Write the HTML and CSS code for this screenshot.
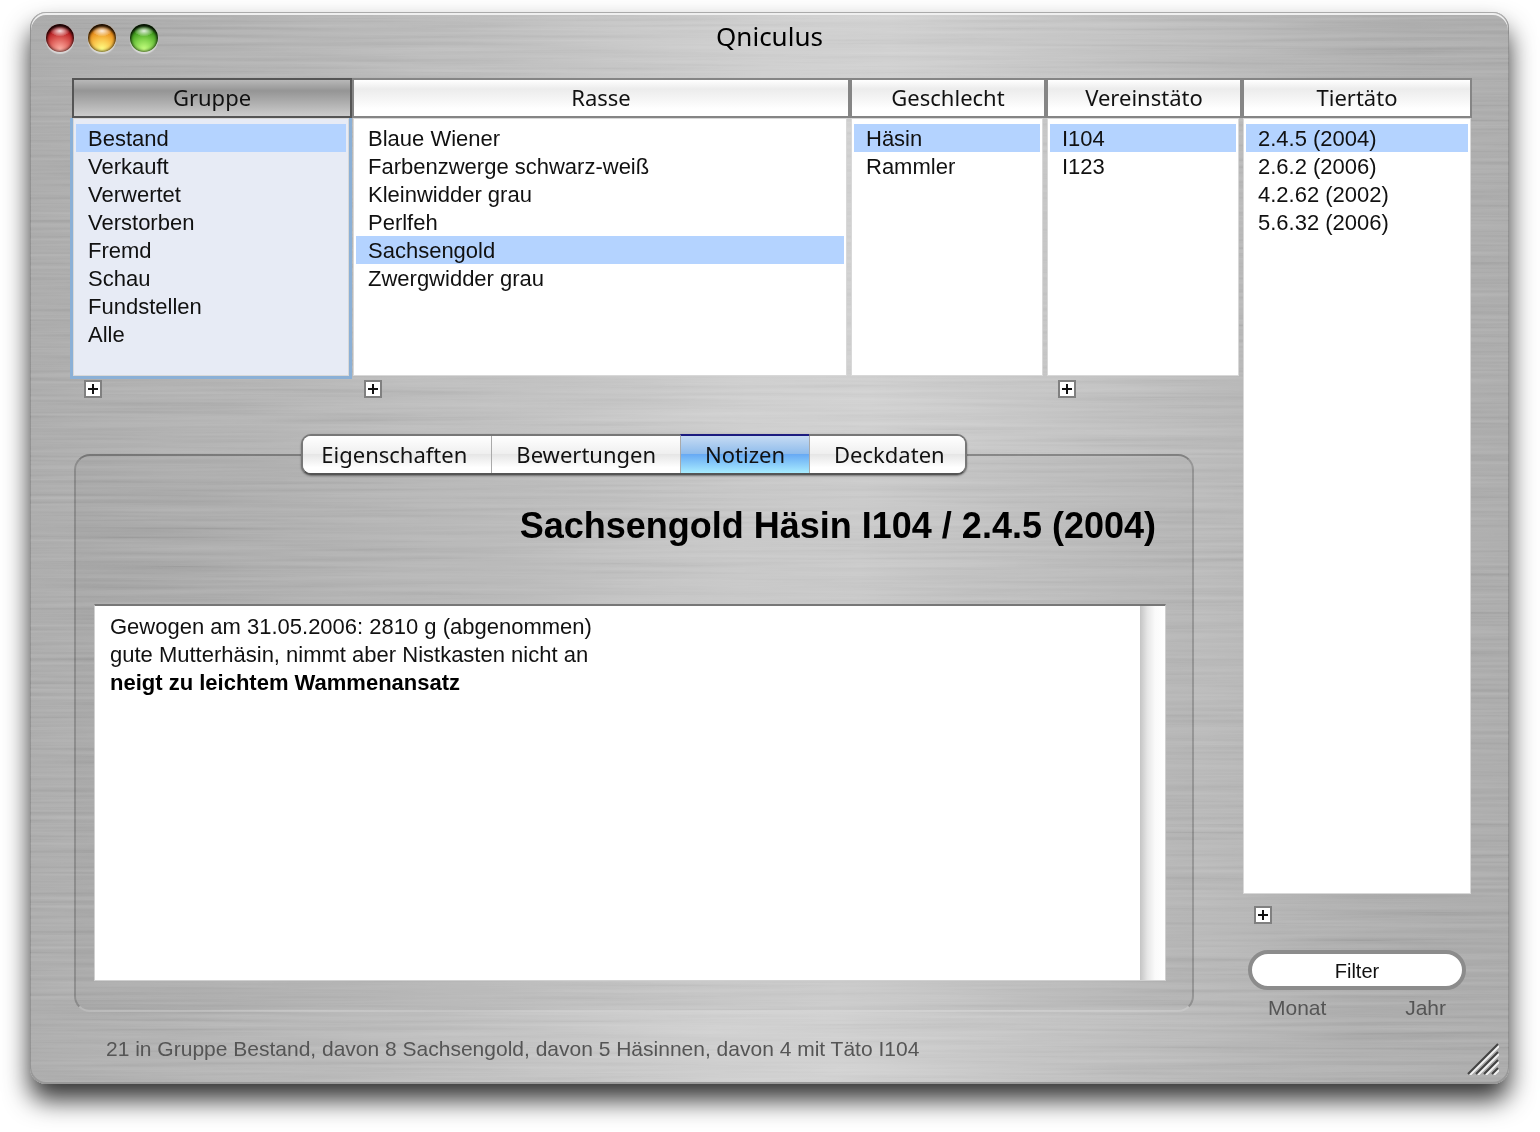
FILE: index.html
```html
<!DOCTYPE html>
<html lang="de">
<head>
  <meta charset="UTF-8">
  <meta name="viewport" content="width=device-width, initial-scale=1">
  <title>Qniculus</title>
  <link rel="stylesheet" href="styles.css">
</head>
<body>
  <div class="window">
    <!-- Gebürstetes Metall -->
    <svg class="metal" aria-hidden="true">
      <filter id="brushed" x="0" y="0" width="100%" height="100%">
        <feTurbulence type="fractalNoise" baseFrequency="0.004 0.26" numOctaves="3" seed="4"/>
        <feColorMatrix values="1 0 0 0 0  1 0 0 0 0  1 0 0 0 0  0 0 0 0 1"/>
      </filter>
      <rect width="100%" height="100%" filter="url(#brushed)"/>
    </svg>

    <header class="titlebar">
      <div class="lights">
        <button class="light red" aria-label="Schließen"></button>
        <button class="light yellow" aria-label="Minimieren"></button>
        <button class="light green" aria-label="Zoomen"></button>
      </div>
      <h1>Qniculus</h1>
    </header>

    <main class="workspace">
      <div class="left">
        <div class="browser">
          <section class="column active">
            <button class="column-head">Gruppe</button>
            <ul class="list">
              <li><button class="row selected">Bestand</button></li>
              <li><button class="row">Verkauft</button></li>
              <li><button class="row">Verwertet</button></li>
              <li><button class="row">Verstorben</button></li>
              <li><button class="row">Fremd</button></li>
              <li><button class="row">Schau</button></li>
              <li><button class="row">Fundstellen</button></li>
              <li><button class="row">Alle</button></li>
            </ul>
            <button class="plus" aria-label="Gruppe hinzufügen"></button>
          </section>
          <section class="column">
            <button class="column-head">Rasse</button>
            <ul class="list">
              <li><button class="row">Blaue Wiener</button></li>
              <li><button class="row">Farbenzwerge schwarz-weiß</button></li>
              <li><button class="row">Kleinwidder grau</button></li>
              <li><button class="row">Perlfeh</button></li>
              <li><button class="row selected">Sachsengold</button></li>
              <li><button class="row">Zwergwidder grau</button></li>
            </ul>
            <button class="plus" aria-label="Rasse hinzufügen"></button>
          </section>
          <section class="column">
            <button class="column-head">Geschlecht</button>
            <ul class="list">
              <li><button class="row selected">Häsin</button></li>
              <li><button class="row">Rammler</button></li>
            </ul>
          </section>
          <section class="column">
            <button class="column-head">Vereinstäto</button>
            <ul class="list">
              <li><button class="row selected">I104</button></li>
              <li><button class="row">I123</button></li>
            </ul>
            <button class="plus" aria-label="Vereinstäto hinzufügen"></button>
          </section>
        </div>

        <div class="details">
          <div class="tabs" role="tablist">
            <button class="tab" role="tab" aria-selected="false">Eigenschaften</button>
            <button class="tab" role="tab" aria-selected="false">Bewertungen</button>
            <button class="tab" role="tab" aria-selected="true">Notizen</button>
            <button class="tab" role="tab" aria-selected="false">Deckdaten</button>
          </div>
          <div class="panel" role="tabpanel">
            <h2>Sachsengold Häsin I104 / 2.4.5 (2004)</h2>
            <div class="notes">
              <div class="notes-text" contenteditable="true" role="textbox" aria-multiline="true" aria-label="Notizen" spellcheck="false">
                <p>Gewogen am 31.05.2006: 2810 g (abgenommen)</p>
                <p>gute Mutterhäsin, nimmt aber Nistkasten nicht an</p>
                <p><strong>neigt zu leichtem Wammenansatz</strong></p>
              </div>
              <div class="track"></div>
            </div>
          </div>
        </div>
      </div>

      <div class="right">
        <section class="column">
          <button class="column-head">Tiertäto</button>
          <ul class="list">
            <li><button class="row selected">2.4.5 (2004)</button></li>
            <li><button class="row">2.6.2 (2006)</button></li>
            <li><button class="row">4.2.62 (2002)</button></li>
            <li><button class="row">5.6.32 (2006)</button></li>
          </ul>
          <button class="plus" aria-label="Tiertäto hinzufügen"></button>
        </section>
        <div class="filter">
          <input type="text" class="filter-input" value="Filter" aria-label="Filter">
          <div class="filter-labels"><span>Monat</span><span>Jahr</span></div>
        </div>
      </div>
    </main>

    <footer class="status">21 in Gruppe Bestand, davon 8 Sachsengold, davon 5 Häsinnen, davon 4 mit Täto I104</footer>

    <svg class="grip" viewBox="0 0 32 32" aria-hidden="true">
      <path d="M3 32 32 3M11 32 32 11M19 32 32 19M27 32 32 27" stroke="#f2f2f2" stroke-width="2"/>
      <path d="M1 31 31 1M9 31 31 9M17 31 31 17M25 31 31 25" stroke="#444" stroke-width="2"/>
    </svg>
  </div>
</body>
</html>
```
FILE: styles.css
```css
:root {
  --ui-font: "Lucida Grande", "Noto Sans", sans-serif;
  --text-font: "Liberation Sans", Arial, sans-serif;
  --select: #b4d3ff;
  --line: #858585;
}

* { box-sizing: border-box; }
body { margin: 0; padding: 12px 31px 48px 30px; min-height: 100vh; display: flex; background: #fff; color: #111; font: 22px/28px var(--text-font); }
button, input { margin: 0; padding: 0; border: none; background: none; color: inherit; font: inherit; }
h1, h2, p, ul { margin: 0; padding: 0; list-style: none; }

/* Fenster */
.window { position: relative; isolation: isolate; flex: 1; min-width: 0; display: flex; flex-direction: column; border-radius: 16px; background: linear-gradient(93deg, #a4a4a4 0%, #acacac 14%, #b8b8b8 30%, #cacaca 48%, #cccccc 56%, #b8b8b8 74%, #a8a8a8 90%, #a4a4a4 100%); box-shadow: 0 16px 26px rgba(0,0,0,0.8); }
.window::after { content: ""; position: absolute; inset: 0; z-index: -1; border-radius: 16px; border-right: 1px solid rgba(0,0,0,0.15); border-left: 1px solid rgba(0,0,0,0.15); box-shadow: inset 0 1px #aaa, inset 0 3px #efefef, inset 0 -2px #999; pointer-events: none; }
.metal { position: absolute; inset: 0; z-index: -1; width: 100%; height: 100%; border-radius: 16px; mix-blend-mode: soft-light; opacity: 0.45; }

.titlebar { display: grid; grid-template-columns: 1fr auto 1fr; height: 66px; padding: 10px 16px 0; align-items: start; }
.titlebar h1 { color: #000; font: 26px/28px var(--ui-font); }
.lights { display: flex; gap: 14px; padding-top: 2px; }
.light { width: 28px; height: 28px; border-radius: 50%; box-shadow: inset 0 3px 3px rgba(0,0,0,0.8), inset 0 0 3px 1px rgba(0,0,0,0.6), 0 2px 1px rgba(255,255,255,0.5); }
.red { background: radial-gradient(ellipse 9px 5px at 50% 25%, rgba(255,255,255,0.85), rgba(255,255,255,0.1) 100%, transparent), radial-gradient(circle at 50% 90%, #ffb0a4, #e0625c 35%, #b51c20 65%, #7c1013); }
.yellow { background: radial-gradient(ellipse 9px 5px at 50% 25%, rgba(255,255,255,0.85), rgba(255,255,255,0.1) 100%, transparent), radial-gradient(circle at 50% 90%, #ffff85, #f9c34a 35%, #e68a18 65%, #8b3c08); }
.green { background: radial-gradient(ellipse 9px 5px at 50% 25%, rgba(255,255,255,0.85), rgba(255,255,255,0.1) 100%, transparent), radial-gradient(circle at 50% 90%, #c6ff80, #7fd24a 35%, #3c981a 65%, #164d0c); }

/* Aufteilung */
.workspace { flex: 1; display: flex; padding: 0 37px 0 42px; }
.left { flex: 1170 1 0; min-width: 0; display: flex; flex-direction: column; }
.right { flex: 230 1 0; min-width: 0; display: flex; flex-direction: column; }
.browser { display: grid; grid-template-columns: 280fr 498fr 196fr 196fr; }

/* Spalten */
.column { display: flex; flex-direction: column; align-items: stretch; }
.column-head { height: 40px; padding-bottom: 2px; border: 2px solid var(--line); background: linear-gradient(#fff, #ececec 25%, #f4f4f4 50%, #fff 80%); font: 22px/34px var(--ui-font); text-align: center; }
.active .column-head { border-color: #555; background: linear-gradient(#b8b8b8, #959595 30%, #a8a8a8 55%, #ccc); }
.list { min-height: 258px; margin: 0 3px 0 1px; padding: 5px 2px; border: 1px solid #d8d8d8; background: #fff; }
.active .list { background: #e7ebf5; box-shadow: 0 0 0 3px #8bb0d6; clip-path: inset(0 -4px -4px); }
.row { display: block; width: 100%; height: 28px; padding: 2px 12px 0; line-height: 26px; text-align: left; white-space: nowrap; }
.selected { background: var(--select); }
.plus { width: 18px; height: 18px; margin: 4px 0 0 12px; border: 2px solid #808080; background: linear-gradient(#111, #111) center / 10px 2px no-repeat, linear-gradient(#111, #111) center / 2px 10px no-repeat, #fff; }
.right .column { flex: 1; }
.right .list { flex: 1; margin-right: 1px; }
.right .plus { margin-top: 12px; }

/* Reiter und Notizen */
.details { flex: 1; display: flex; flex-direction: column; margin: 36px 48px 10px 2px; }
.tabs { position: relative; z-index: 1; align-self: center; display: flex; height: 41px; border: 2px solid #777; border-bottom-color: #555; border-radius: 10px; background: #fff; box-shadow: 0 1px 2px rgba(0,0,0,0.4); }
.tab { padding: 0 24px 2px; border-left: 1px solid #aaa; background: linear-gradient(#fff, #efefef 48%, #e6e6e6 50%, #fff 85%); font: 22px/34px var(--ui-font); }
.tab:first-child { padding-left: 18px; border-left: none; border-radius: 8px 0 0 8px; }
.tab:last-child { padding-right: 20px; border-radius: 0 8px 8px 0; }
.tab[aria-selected="true"] { margin-top: -2px; border-top: 2px solid #1c1c80; background: linear-gradient(#c6dbf3, #8fbcec 48%, #68aaf4 50%, #a8ecff); }
.panel { flex: 1; display: flex; flex-direction: column; margin-top: -21px; padding: 46px 26px 29px 18px; border: 2px solid rgba(0,0,0,0.18); border-top-color: rgba(0,0,0,0.3); border-bottom-color: rgba(255,255,255,0.2); border-radius: 16px; background: rgba(0,0,0,0.03); }
.panel h2 { padding-right: 10px; font-size: 36px; line-height: 48px; text-align: right; color: #000; }
.notes { flex: 1; display: flex; margin-top: 54px; border: 1px solid #d0d0d0; border-top: 2px solid #777; background: #fff; }
.notes-text { flex: 1; padding: 7px 15px; outline: none; }
.notes-text strong { color: #000; }
.track { width: 25px; background: linear-gradient(90deg, #c4c4c4, #e6e6e6 30%, #fafafa 60%, #fff); }

/* Filter */
.filter { display: flex; flex-direction: column; padding: 26px 6px 0; }
.filter-input { width: 100%; height: 40px; padding-top: 2px; border: 4px solid #8c8c8c; border-radius: 20px; background: #fff; font-size: 20px; text-align: center; outline: none; }
.filter-labels { display: flex; justify-content: space-between; padding: 4px 20px 0; color: #555; font-size: 21px; }

.status { padding: 13px 76px 21px; color: #555; font-size: 21px; }
.grip { position: absolute; right: 10px; bottom: 9px; width: 32px; height: 32px; }
```
